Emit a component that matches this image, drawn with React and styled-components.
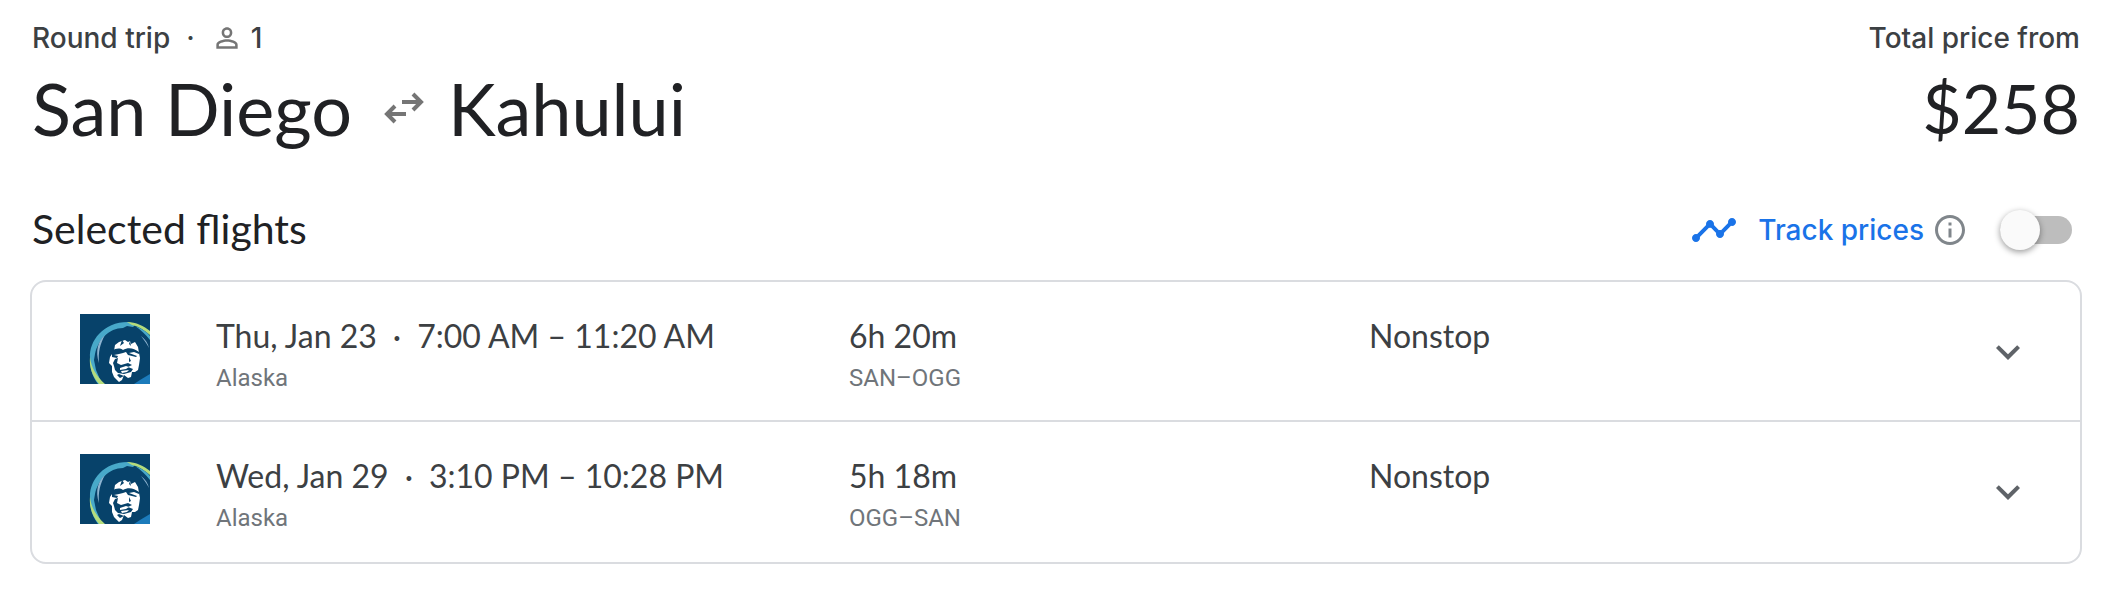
import { useState } from "react";
import styled, { createGlobalStyle } from "styled-components";
import {
  MdExpandMore,
  MdInfoOutline,
  MdPersonOutline,
  MdTimeline,
} from "react-icons/md";

const GlobalStyle = createGlobalStyle`
  body {
    margin: 0;
    background-color: #ffffff;
    font-family: Lato, "Liberation Sans", sans-serif;
    color: #3c4043;
  }
`;
const Page = styled.main`
  padding: 20px 44px 36px 30px;
`;
const Header = styled.header`
  display: flex;
  justify-content: space-between;
  padding: 0 2px;
`;
const Meta = styled.div`
  display: flex;
  align-items: center;
  justify-content: ${(props) => props.$end ? "flex-end" : "flex-start"};
  height: 36px;
  font-family: Inter, sans-serif;
  font-size: 28px;
  font-weight: 500;
`;
const Dot = styled.span`
  padding: 0 16px;
`;
const Passengers = styled.span`
  display: flex;
  align-items: center;
  gap: 8px;

  svg {
    color: #757575;
  }
`;
const Route = styled.h1`
  display: flex;
  align-items: center;
  height: 104px;
  margin: 0;
  font-size: 72px;
  font-weight: 400;
  color: #202124;
`;
const SwapIcon = styled.svg`
  width: 40px;
  height: 32px;
  margin: 0 24px 0 32px;
  fill: none;
  stroke: #757575;
  stroke-width: 4;
`;
const Price = styled.div`
  height: 104px;
  line-height: 104px;
  font-size: 68px;
  text-align: right;
  color: #202124;
`;
const Toolbar = styled.div`
  display: flex;
  align-items: center;
  justify-content: space-between;
  height: 64px;
  margin: 38px 0 18px;
  padding: 0 10px 0 2px;
`;
const Title = styled.h2`
  margin: 0;
  padding-bottom: 4px;
  font-size: 41px;
  font-weight: 400;
  color: #202124;
`;
const Track = styled.div`
  display: flex;
  align-items: center;
`;
const TrackLabel = styled.label`
  display: flex;
  align-items: center;
  gap: 20px;
  font-family: Inter, sans-serif;
  font-size: 28px;
  font-weight: 500;
  color: #1a73e8;
`;
const InfoButton = styled.button`
  display: flex;
  margin: 0 32px 0 8px;
  padding: 0;
  border: none;
  background: none;
  color: #80868b;
  cursor: pointer;
`;
const Switch = styled.input`
  appearance: none;
  display: flex;
  align-items: center;
  width: 72px;
  height: 28px;
  margin: 0;
  border-radius: 14px;
  background-color: #bdbdbd;
  cursor: pointer;

  &::before {
    content: "";
    width: 40px;
    height: 40px;
    flex: none;
    border-radius: 50%;
    background-color: #fafafa;
    box-shadow: 0 2px 6px rgba(0, 0, 0, 0.4);
  }
  &:checked {
    justify-content: flex-end;
    background-color: #8ab4f8;
  }
  &:checked::before {
    background-color: #1a73e8;
  }
`;
const FlightList = styled.ul`
  margin: 0;
  padding: 0;
  border: 2px solid #dadce0;
  border-radius: 16px;
  list-style: none;
`;
const Flight = styled.li`
  display: grid;
  grid-template-columns: 136px 633fr 520fr 615fr 48px;
  align-items: start;
  box-sizing: border-box;
  height: 140px;
  padding: 32px 48px 0;

  &:not(:last-child) {
    border-bottom: 2px solid #dadce0;
  }
`;
const Logo = styled.svg`
  width: 70px;
  height: 70px;
`;
const Main = styled.div`
  line-height: 44px;
  font-size: 32px;
  white-space: nowrap;
`;
const Sub = styled.div`
  line-height: 40px;
  font-family: Roboto, sans-serif;
  font-size: 24px;
  color: #70757a;
`;
const Expand = styled.button`
  display: flex;
  margin: 14px 0 0;
  padding: 0;
  border: none;
  background: none;
  color: #5f6368;
  cursor: pointer;
`;

const flights = [
  {
    date: "Thu, Jan 23",
    time: "7:00 AM – 11:20 AM",
    airline: "Alaska",
    duration: "6h 20m",
    airports: "SAN–OGG",
    stops: "Nonstop",
  },
  {
    date: "Wed, Jan 29",
    time: "3:10 PM – 10:28 PM",
    airline: "Alaska",
    duration: "5h 18m",
    airports: "OGG–SAN",
    stops: "Nonstop",
  },
];

const AirlineLogo = () => (
  <Logo viewBox="0 0 70 70" role="img" aria-label="Alaska">
    <path fill="#07426a" d="M0 0h70v70H0z" />
    {/* hood */}
    <path fill="#48a9c9" d="M10 44C9 27 23 8 48 8l8 2-3 3-6-1-4 2C29 14 18 26 15 40l-1 6 2 10 6 14h-4C12 62 10 54 10 44z" />
    <path fill="#b5dc7c" d="M47 8c9 0 17 4 23 9v4c-6-5-12-9-18-10zM10 43c1 10 6 19 15 27h-6C12 62 9 53 10 43z" />
    <path fill="#48a9c9" d="M55 12c6 2 11 5 15 10v4c-5-6-9-10-15-14z" />
    <path fill="#8eb4d1" d="M19 49c-4-12-1-22 6-28-5 9-7 17-6 28zM61 22c4 3 7 7 8 12-2-4-5-8-8-12z" />
    <path fill="#1c7bbb" d="M54 70l6-4 10-6v10z" />
    {/* face */}
    <path fill="#fff" d="M34 37l1-6 4-3 6-2 3 2 2-1 1 3 4-2 3 5 1 6 1 5-1 7-1 5-3 2h-3l-1 5-3 1-4-3-2 5-3 2-5-5-2-5v-6l-3-3 1-6z" />
    <path fill="#07426a" d="M32 37c4-3 8-3 11-1 5-3 11-2 16 2v2l-5-2-5 1 8 3-1 1-8-2-2-3-3 1-4 1-5 1 4 1-1 2-5-1z" />
    <path fill="#07426a" d="M38 44l-1 5 4 2 7-2 4 2-4 2 5 2-2 3-7 2-6-1-3-3-1-4-1-3 2-4zM49 43l2 4-2 1z" />
    <path fill="#fff" d="M40 54l6-2 3 1-3 2-6 1zM41 57l8-1-2 2-5 1z" />
    <path fill="#07426a" d="M39 60l5 2-4 2-3-3zM42 26l2 3-4 3zM50 27l1 5-2-2z" />
  </Logo>
);

const App = () => {
  const [tracking, setTracking] = useState(false);

  return (
    <Page>
      <GlobalStyle />
      <Header>
        <div>
          <Meta>
            Round trip<Dot>·</Dot>
            <Passengers>
              <MdPersonOutline size={32} />1
            </Passengers>
          </Meta>
          <Route>
            San Diego
            <SwapIcon viewBox="0 0 40 32">
              <path d="M18 10h19M29 2l8 8-8 8M22 22H3M11 14l-8 8 8 8" />
            </SwapIcon>
            Kahului
          </Route>
        </div>
        <div>
          <Meta $end>Total price from</Meta>
          <Price>$258</Price>
        </div>
      </Header>
      <Toolbar>
        <Title>Selected flights</Title>
        <Track>
          <TrackLabel htmlFor="track">
            <MdTimeline size={48} />
            Track prices
          </TrackLabel>
          <InfoButton aria-label="About price tracking">
            <MdInfoOutline size={36} />
          </InfoButton>
          <Switch
            id="track"
            type="checkbox"
            role="switch"
            checked={tracking}
            onChange={(e) => setTracking(e.target.checked)}
          />
        </Track>
      </Toolbar>
      <FlightList>
        {flights.map((flight) => (
          <Flight key={flight.airports}>
            <AirlineLogo />
            <div>
              <Main>
                {flight.date}<Dot>·</Dot>{flight.time}
              </Main>
              <Sub>{flight.airline}</Sub>
            </div>
            <div>
              <Main>{flight.duration}</Main>
              <Sub>{flight.airports}</Sub>
            </div>
            <Main>{flight.stops}</Main>
            <Expand aria-label="Flight details">
              <MdExpandMore size={48} />
            </Expand>
          </Flight>
        ))}
      </FlightList>
    </Page>
  );
};

export default App;
